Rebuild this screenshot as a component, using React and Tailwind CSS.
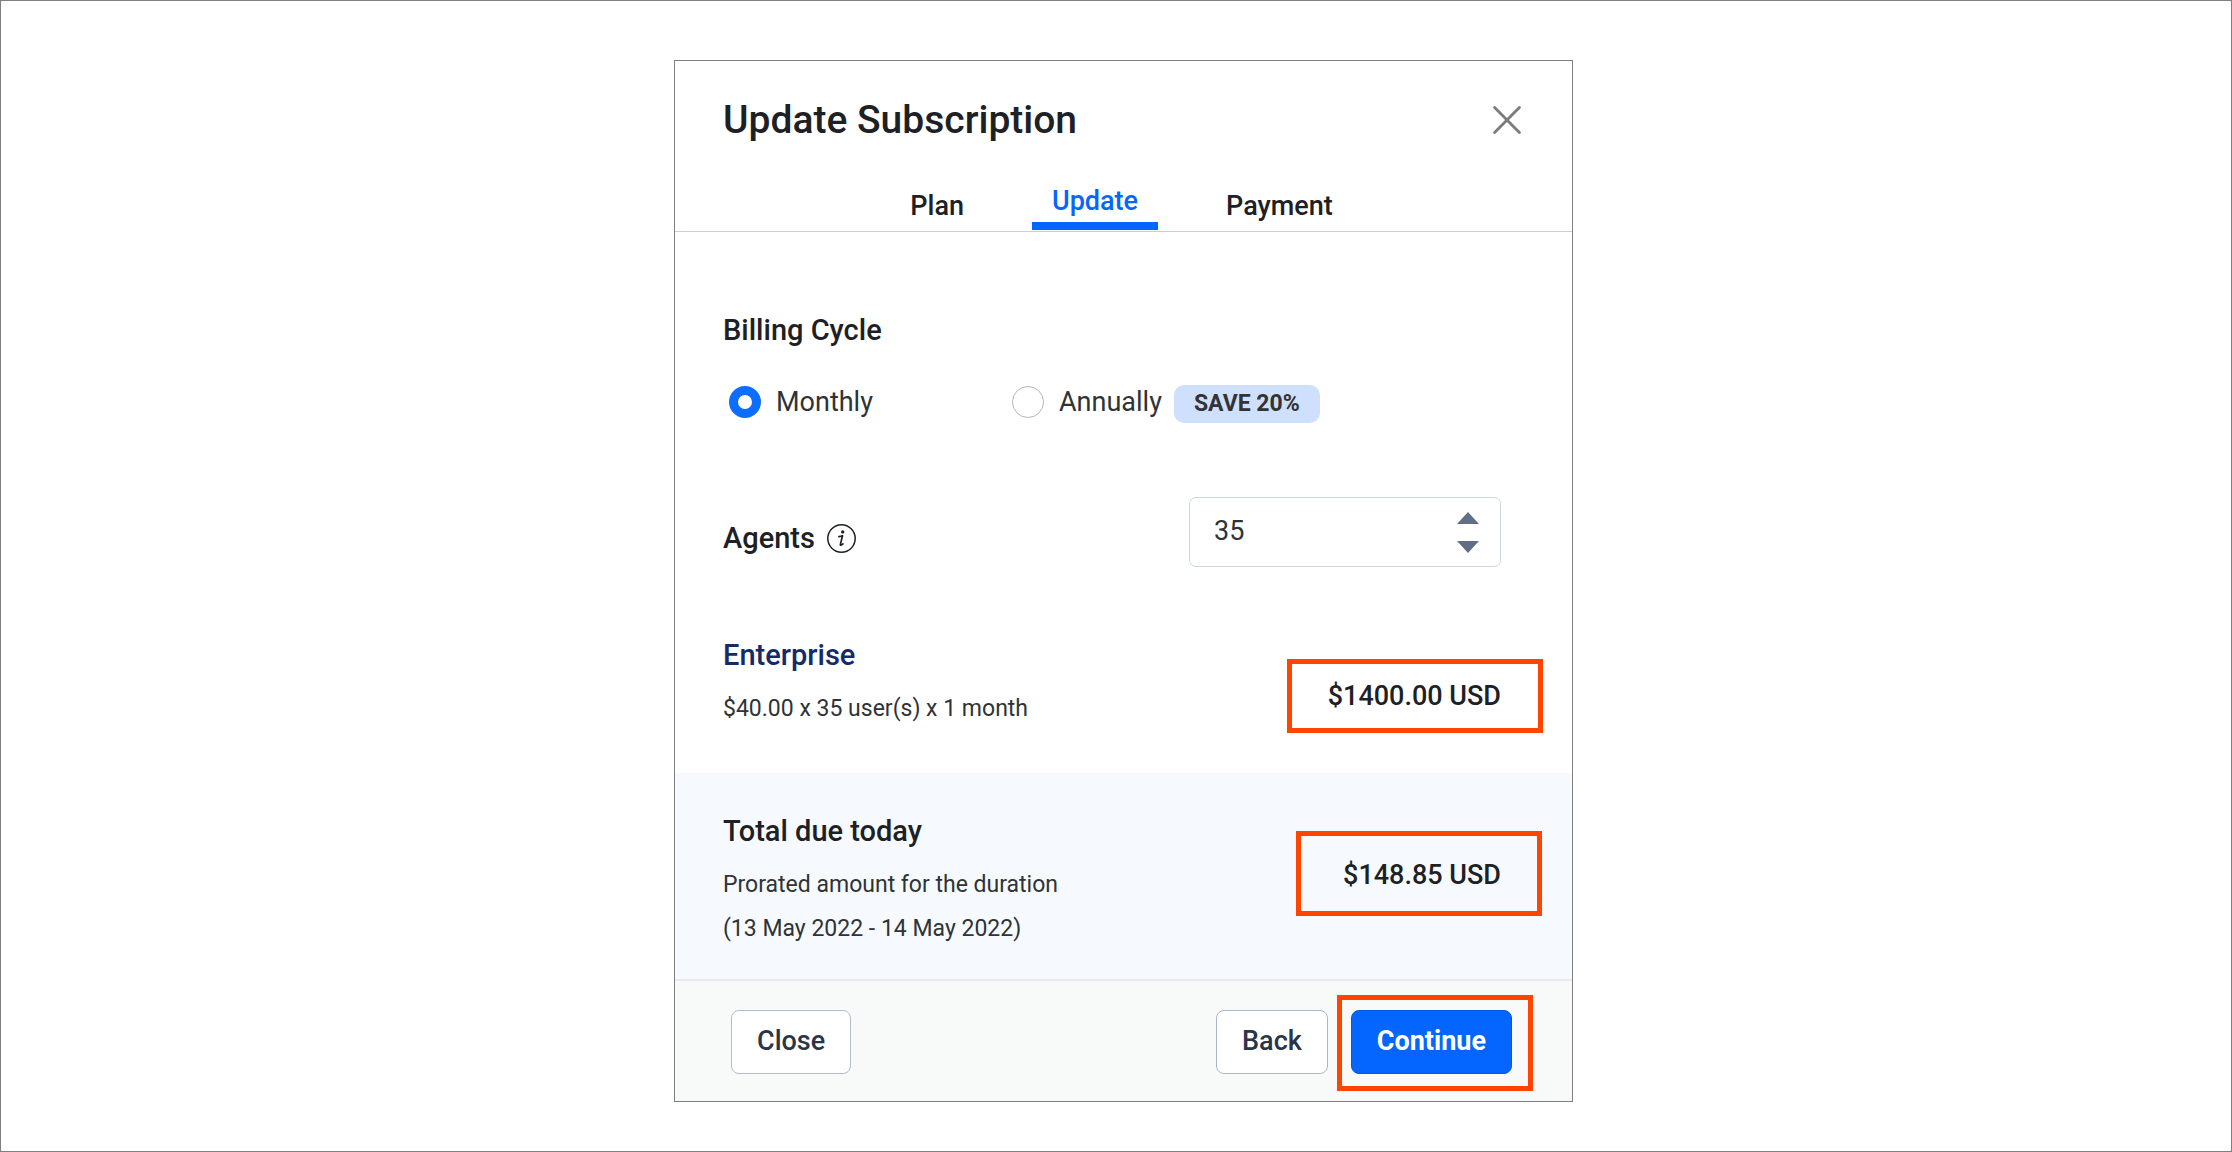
import { useState } from "react";

function CloseIcon() {
  return (
    <svg viewBox="0 0 28 28" className="size-7" fill="none" stroke="currentColor" strokeWidth="2.8" strokeLinecap="round" aria-hidden="true">
      <path d="M1.6 1.6 26.4 26.4M26.4 1.6 1.6 26.4" />
    </svg>
  );
}

function InfoIcon() {
  return (
    <svg viewBox="0 0 29 29" className="size-[29px]" fill="none" stroke="currentColor" aria-hidden="true">
      <circle cx="14.5" cy="14.5" r="13.7" strokeWidth="1.5" />
      <circle cx="15.7" cy="7.9" r="1.7" fill="currentColor" stroke="none" />
      <path d="M12 12.7c1.4-.3 2.4-.6 3.5-1l-2.1 8.7c-.2 1.2.6 1.1 2.6-.6" strokeWidth="1.7" strokeLinecap="round" strokeLinejoin="round" />
    </svg>
  );
}

function Tab({ label, active }) {
  return (
    <button
      type="button"
      role="tab"
      aria-selected={active}
      className={
        active
          ? "border-b-8 border-[#0465ff] px-5 pb-[5px] text-[#0465ff]"
          : "px-5 pb-2 text-[#1d2125]"
      }
    >
      {label}
    </button>
  );
}

function Cycle({ id, label, checked, onSelect }) {
  return (
    <label htmlFor={id} className="flex h-[34px] items-center gap-[15px]">
      <input
        id={id}
        type="radio"
        name="cycle"
        checked={checked}
        onChange={onSelect}
        className="size-8 appearance-none rounded-full border border-[#b8b8b8] bg-white checked:border-[9px] checked:border-[#0d6efd]"
      />
      {label}
    </label>
  );
}

function Stepper({ up, onClick }) {
  return (
    <button type="button" aria-label={up ? "Increase agents" : "Decrease agents"} onClick={onClick} className="text-[#5f6f87]">
      <svg viewBox="0 0 22 12" className="h-3 w-[22px]" fill="currentColor" aria-hidden="true">
        <path d={up ? "M11 0 22 12H0z" : "M0 0h22L11 12z"} />
      </svg>
    </button>
  );
}

export default function App() {
  const [cycle, setCycle] = useState("monthly");
  const [agents, setAgents] = useState(35);

  return (
    <main className="min-h-screen border border-[#7f7f7f] bg-white pt-[59px] pb-12 pl-[15px] font-[Roboto,sans-serif] text-[27px] leading-8 text-[#2f3336]">
      <section role="dialog" aria-labelledby="title" className="mx-auto w-full max-w-[899px] border border-[#7f7f7f]">
        <header className="border-b border-[#c5cfdd] pt-[35px] pb-px font-medium">
          <div className="flex items-center justify-between pr-[51px] pl-12">
            <h1 id="title" className="text-[39px] leading-[48px] text-[#1d2125]">Update Subscription</h1>
            <button type="button" aria-label="Close dialog" className="text-[#7b7b7b]">
              <CloseIcon />
            </button>
          </div>
          <div role="tablist" className="mt-[41px] flex items-end justify-center gap-12 pr-1">
            <Tab label="Plan" active={false} />
            <Tab label="Update" active />
            <Tab label="Payment" active={false} />
          </div>
        </header>

        <div className="pt-20 pb-10 pl-12">
          <h2 className="text-[29px] leading-9 font-medium text-[#1d2125]">Billing Cycle</h2>
          <div className="mt-[37px] flex items-start pl-[6px]">
            <div className="w-[283px]">
              <Cycle id="monthly" label="Monthly" checked={cycle === "monthly"} onSelect={() => setCycle("monthly")} />
            </div>
            <Cycle id="annually" label="Annually" checked={cycle === "annually"} onSelect={() => setCycle("annually")} />
            <span className="ml-3 flex h-[38px] items-center rounded-[10px] bg-[#cfe0fe] px-5 text-[23px] font-bold text-[#333333]">SAVE 20%</span>
          </div>

          <div className="mt-[74px] flex items-start justify-between pr-[71px]">
            <div className="flex items-center gap-3 pt-[23px] text-[29px] leading-9 font-medium text-[#1d2125]">
              <label htmlFor="agents">Agents</label>
              <InfoIcon />
            </div>
            <div className="flex h-[70px] w-[312px] items-center justify-between rounded-[7px] border border-[#cfd6df] pr-[21px] pl-6">
              <input
                id="agents"
                type="text"
                inputMode="numeric"
                value={agents}
                onChange={(e) => setAgents(Number(e.target.value) || 0)}
                className="w-40 pb-0.5 outline-none"
              />
              <span className="flex flex-col gap-[17px]">
                <Stepper up onClick={() => setAgents(agents + 1)} />
                <Stepper up={false} onClick={() => setAgents(Math.max(0, agents - 1))} />
              </span>
            </div>
          </div>

          <div className="mt-[70px] flex items-start justify-between pr-[29px]">
            <div>
              <h2 className="text-[29px] leading-9 font-medium text-[#142b67]">Enterprise</h2>
              <p className="mt-[14px] text-[23px] leading-[44px]">$40.00 x {agents} user(s) x 1 month</p>
            </div>
            <p className="mt-[22px] flex h-[74px] w-[256px] items-center justify-end border-[5px] border-[#ff4500] pr-[37px] font-medium text-[#1d2125]">$1400.00 USD</p>
          </div>
        </div>

        <div className="flex items-start justify-between bg-[#f6fafe] pt-10 pr-[30px] pb-7 pl-12">
          <div>
            <h2 className="text-[29px] leading-9 font-medium text-[#1d2125]">Total due today</h2>
            <p className="mt-[14px] text-[23px] leading-[44px]">
              Prorated amount for the duration
              <br />
              (13 May 2022 - 14 May 2022)
            </p>
          </div>
          <p className="mt-[18px] flex h-[85px] w-[246px] items-center justify-end border-[5px] border-[#ff4500] pt-0.5 pr-[36px] font-medium text-[#1d2125]">$148.85 USD</p>
        </div>

        <footer className="flex items-center border-t-2 border-[#e6e9ee] bg-[#f8faf9] pt-[29px] pr-[60px] pb-[27px] pl-14 font-medium text-[#2a3547]">
          <button type="button" className="mr-auto h-16 rounded-lg border border-[#b0bdcd] bg-white px-[25px] pb-0.5">Close</button>
          <button type="button" className="mr-[23px] h-16 rounded-lg border border-[#a9b7c9] bg-white px-[25px] pb-0.5">Back</button>
          <div className="relative">
            <button type="button" className="h-16 rounded-lg border border-[#0558dc] bg-[#0465ff] px-[25px] pb-0.5 font-bold text-white">Continue</button>
            <span className="pointer-events-none absolute -top-[15px] -right-[21px] -bottom-[17px] -left-[14px] border-[5px] border-[#ff4500]" />
          </div>
        </footer>
      </section>
    </main>
  );
}
